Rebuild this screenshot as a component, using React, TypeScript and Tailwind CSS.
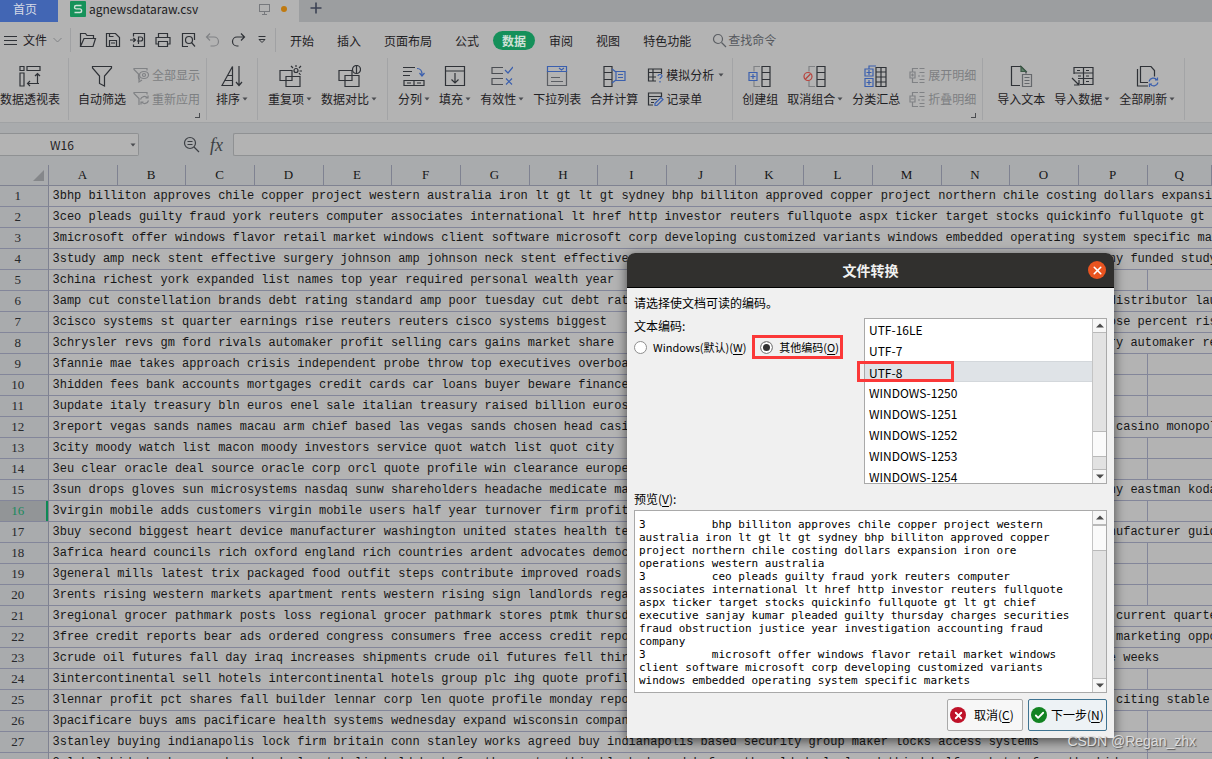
import { useState, type ReactNode } from "react";
import { X, Check } from "lucide-react";

const COLUMNS = "ABCDEFGHIJKLMNOPQ".split("");

const ENCODINGS = [
  "UTF-16LE",
  "UTF-7",
  "UTF-8",
  "WINDOWS-1250",
  "WINDOWS-1251",
  "WINDOWS-1252",
  "WINDOWS-1253",
  "WINDOWS-1254",
];

// text spills from column A, `tail` is the part that shows up again in column P
const ROWS: { text: string; tail?: string }[] = [
  { text: "3bhp billiton approves chile copper project western australia iron lt gt lt gt sydney bhp billiton approved copper project northern chile costing dollars expansion iron ore" },
  { text: "3ceo pleads guilty fraud york reuters computer associates international lt href http investor reuters fullquote aspx ticker target stocks quickinfo fullquote gt lt gt chief" },
  { text: "3microsoft offer windows flavor retail market windows client software microsoft corp developing customized variants windows embedded operating system specific markets" },
  { text: "3study amp neck stent effective surgery johnson amp johnson neck stent effective", tail: "ompany funded study" },
  { text: "3china richest york expanded list names top year required personal wealth year" },
  { text: "3amp cut constellation brands debt rating standard amp poor tuesday cut debt rating", tail: "    distributor launched" },
  { text: "3cisco systems st quarter earnings rise reuters reuters cisco systems biggest", tail: "   rose percent rising" },
  { text: "3chrysler revs gm ford rivals automaker profit selling cars gains market share", tail: "dustry automaker reported" },
  { text: "3fannie mae takes approach crisis independent probe throw top executives overboard" },
  { text: "3hidden fees bank accounts mortgages credit cards car loans buyer beware finance" },
  { text: "3update italy treasury bln euros enel sale italian treasury raised billion euros" },
  { text: "3report vegas sands names macau arm chief based las vegas sands chosen head casino", tail: "     casino monopoly" },
  { text: "3city moody watch list macon moody investors service quot watch list quot city" },
  { text: "3eu clear oracle deal source oracle corp orcl quote profile win clearance european" },
  { text: "3sun drops gloves sun microsystems nasdaq sunw shareholders headache medicate market", tail: "  many eastman kodak" },
  { text: "3virgin mobile adds customers virgin mobile users half year turnover firm profit" },
  { text: "3buy second biggest heart device manufacturer washington united states health technology", tail: "  manufacturer guidant" },
  { text: "3africa heard councils rich oxford england rich countries ardent advocates democracy" },
  { text: "3general mills latest trix packaged food outfit steps contribute improved roads" },
  { text: "3rents rising western markets apartment rents western rising sign landlords regain" },
  { text: "3regional grocer pathmark posts loss regional grocer pathmark stores ptmk thursday", tail: "     current quarter" },
  { text: "3free credit reports bear ads ordered congress consumers free access credit reports", tail: "     marketing opportunity" },
  { text: "3crude oil futures fall day iraq increases shipments crude oil futures fell third", tail: "three weeks" },
  { text: "3intercontinental sell hotels intercontinental hotels group plc ihg quote profile" },
  { text: "3lennar profit pct shares fall builder lennar corp len quote profile monday reported", tail: "     citing stable" },
  { text: "3pacificare buys ams pacificare health systems wednesday expand wisconsin company" },
  { text: "3stanley buying indianapolis lock firm britain conn stanley works agreed buy indianapolis based security group maker locks access systems" },
  { text: "3global bids bank cross border deal metabolic held back fourth quarter thin block demand before the old deal closed third half market before the bid" },
];

// rows whose spilled text covers the last column edge
const LONG_ROWS = [1, 2, 3];

const PREVIEW = `3\tbhp billiton approves chile copper project western
australia iron lt gt lt gt sydney bhp billiton approved copper
project northern chile costing dollars expansion iron ore
operations western australia
3\tceo pleads guilty fraud york reuters computer
associates international lt href http investor reuters fullquote
aspx ticker target stocks quickinfo fullquote gt lt gt chief
executive sanjay kumar pleaded guilty thursday charges securities
fraud obstruction justice year investigation accounting fraud
company
3\tmicrosoft offer windows flavor retail market windows
client software microsoft corp developing customized variants
windows embedded operating system specific markets`;

const DARK = "#2f3237";
const BLUE = "#3a5fae";
const GREY = "#808285";

function Svg({ size = 22, children, color = DARK }: { size?: number; children: ReactNode; color?: string }) {
  return (
    <svg width={size} height={size} viewBox={`0 0 ${size} ${size}`} fill="none" stroke={color} strokeWidth={1.2} className="shrink-0">
      {children}
    </svg>
  );
}

function Caret() {
  return (
    <svg width="6" height="4" viewBox="0 0 6 4" className="ml-0.5 shrink-0 fill-[#4a4c50]">
      <path d="M0.5 0.5h5L3 3.5z" />
    </svg>
  );
}

function BigButton({ icon, label, menu }: { icon: ReactNode; label: string; menu?: boolean }) {
  return (
    <button className="flex shrink-0 flex-col items-center">
      <span className="flex h-6 items-start">{icon}</span>
      <span className="flex h-5 items-center whitespace-nowrap">
        {label}
        {menu && <Caret />}
      </span>
    </button>
  );
}

function SmallButton({ icon, label, menu, muted }: { icon: ReactNode; label: string; menu?: boolean; muted?: boolean }) {
  return (
    <button className={`flex h-5 items-center gap-0.5 whitespace-nowrap ${muted ? "text-[#7d7f82]" : ""}`}>
      {icon}
      {label}
      {menu && <Caret />}
    </button>
  );
}

function Group({ children, corner, pad = "px-[9px]" }: { children: ReactNode; corner?: boolean; pad?: string }) {
  return (
    <div className={`relative flex h-[62px] shrink-0 items-start gap-[9px] border-r border-[#a3a4a6] pt-[7px] ${pad}`}>
      {children}
      {corner && <span className="absolute right-1.5 bottom-0.5 size-[5px] border-r border-b border-[#4a4c50]" />}
    </div>
  );
}

function TabStrip() {
  return (
    <div className="flex h-[22px] bg-[#9c9ea0]">
      <button className="w-[58px] bg-[#4266b4] pr-2 pb-1 text-[#d5dae6]">首页</button>
      <div className="flex w-[241px] items-center bg-[#b3b3b3] pr-3 pb-1 pl-3">
        <svg width="16" height="16" viewBox="0 0 16 16" fill="none">
          <rect width="16" height="16" rx="1" fill="#16925a" />
          <path d="M11.5 4.5H6.2a1.7 1.7 0 0 0 0 3.4h3.6a1.8 1.8 0 0 1 0 3.6H4.5" stroke="#cfe3d9" strokeWidth="1.4" />
        </svg>
        <span className="ml-[3px] text-[#1c1c1e]">agnewsdataraw.csv</span>
        <svg width="11" height="11" viewBox="0 0 11 11" fill="none" stroke="#77797d" className="ml-auto">
          <rect x="0.5" y="0.5" width="10" height="7" />
          <path d="M5.5 7.5v3M3 10.5h5" />
        </svg>
        <span className="ml-[11px] size-1.5 rounded-full bg-[#c07a10]" />
      </div>
      <button aria-label="新建" className="ml-[11px] pb-1.5">
        <svg width="12" height="12" viewBox="0 0 12 12" stroke="#3b4254" strokeWidth="1.6">
          <path d="M6 0.5v11M0.5 6h11" />
        </svg>
      </button>
    </div>
  );
}

function QuickIcons() {
  return (
    <div className="flex items-center gap-[7px]">
      <Svg size={18}>
        <path d="M1.5 15.5v-13h5l1.5 2h6.5v3M1.5 15.5h12.5l2.5-8H5z" />
      </Svg>
      <Svg size={18}>
        <path d="M2.5 2.5h9l4 4v9h-13z" />
        <path d="M5.5 15.5v-6h7v6M7 12h4M5.5 2.5v3h4" />
      </Svg>
      <Svg size={18}>
        <path d="M4.5 5.5v-3h11v13h-11v-2M1 9h5M4.3 7 6.5 9 4.3 11" />
        <path d="M9.5 13V6h2.2a2 2 0 0 1 0 4H8" />
      </Svg>
      <Svg size={18}>
        <path d="M4.5 6V2.5h9V6M4.5 13h-2.5V6.5h14V13h-2.5" />
        <path d="M4.5 10.5h9v5h-9z" />
      </Svg>
      <Svg size={18}>
        <path d="M15.5 9V2.5h-12v13H9" />
        <circle cx="10" cy="9" r="3.5" />
        <path d="m12.5 11.5 3.5 4" />
      </Svg>
      <Svg size={18} color={GREY}>
        <path d="M6 2.5 2.5 6 6 9.500M2.500 6H10a4.500 4.500 0 0 1 0 9H6.500" />
      </Svg>
      <Svg size={18}>
        <path d="M12 2.500 15.500 6 12 9.500M15.500 6H8a4.500 4.500 0 0 0 0 9h1.500" />
      </Svg>
      <svg width="18" height="10" viewBox="0 0 18 10" fill="none" stroke={DARK}>
        <path d="M4.500 1.500h7M5 4.500l3 3 3-3z" />
      </svg>
    </div>
  );
}

function MenuBar() {
  const tabs = ["开始", "插入", "页面布局", "公式", "数据", "审阅", "视图", "特色功能"];
  return (
    <div className="flex h-9 items-center">
      <button className="flex items-center pl-1">
        <svg width="13" height="11" viewBox="0 0 13 11" stroke={DARK}>
          <path d="M0 1.500h13M0 5.500h13M0 9.500h13" />
        </svg>
        <span className="ml-1.5">文件</span>
        <svg width="9" height="6" viewBox="0 0 9 6" fill="none" stroke={GREY} className="ml-1.5">
          <path d="M0.500 1l4 4 4-4" />
        </svg>
      </button>
      <div className="ml-2 h-6 border-l border-[#a0a1a3]" />
      <div className="pl-2">
        <QuickIcons />
      </div>
      <div className="ml-[3px] h-6 border-l border-[#a0a1a3]" />
      <nav className="ml-[5px] flex shrink-0 gap-[5px]">
        {tabs.map((tab) => (
          <button
            key={tab}
            className={`h-[19px] rounded-full px-[9px] leading-[19px] whitespace-nowrap ${
              tab === "数据" ? "bg-[#15905a] font-bold text-[#cfe0d7]" : ""
            }`}
          >
            {tab}
          </button>
        ))}
      </nav>
      <button className="ml-3 flex shrink-0 items-center gap-px text-[#55585d]">
        <Svg size={15} color="#5b5e63">
          <circle cx="6" cy="6" r="4.500" />
          <path d="m9.500 9.500 4.500 4.500" />
        </Svg>
        查找命令
      </button>
    </div>
  );
}

function Ribbon() {
  return (
    <div className="flex h-[65px] overflow-hidden border-b border-[#a0a2a4]">
      <div className="-ml-2 flex shrink-0">
        <Group pad="px-2">
          <BigButton
            label="数据透视表"
            icon={
              <Svg>
                <path d="M1 1.500h4v4H1zM8 1.500h13v4H8zM1 8h4v13H1zM18.500 19V9M16 11l2.500-2.500L21 11M20 18.500H9M11 16l-2.500 2.500L11 21" />
              </Svg>
            }
          />
        </Group>
      </div>
      <Group corner pad="pl-[9px] pr-1.5">
        <BigButton
          label="自动筛选"
          icon={
            <Svg>
              <path d="M1.500 1.500h19v1.500l-7 8v10l-5-2.500V11l-7-8z" />
            </Svg>
          }
        />
        <div className="-ml-0.5 flex flex-col gap-1">
          <SmallButton
            muted
            label="全部显示"
            icon={
              <Svg size={17} color={GREY}>
                <path d="M7 12.500 5.500 11V7L1 2.500V1.500h13v2" />
                <ellipse cx="11" cy="8" rx="4.500" ry="3.500" />
                <circle cx="11" cy="8" r="1.500" />
                <path d="M6 9v6l3-2" />
              </Svg>
            }
          />
          <SmallButton
            muted
            label="重新应用"
            icon={
              <Svg size={17} color={GREY}>
                <path d="M6 14V7.500L1 2.500V1.500h13v2" />
                <path d="M7.500 8.500a4 4 0 0 1 7-1.500M15 4.500V7h-2.500M15.500 9.500a4 4 0 0 1-7 1.500M8 13.500V11h2.500" />
              </Svg>
            }
          />
        </div>
      </Group>
      <Group>
        <BigButton
          menu
          label="排序"
          icon={
            <Svg>
              <path d="M1 20.500 11.500 1.500v19zM4 15.500h7.500M7 10.500h4.500M18 1v19M15 17l3 3.500L21 17" />
            </Svg>
          }
        />
      </Group>
      <Group pad="px-2.5">
        <BigButton
          menu
          label="重复项"
          icon={
            <Svg size={23}>
              <path d="M1 5.500h12v10H1zM7 11.500h14v10H7z" />
              <circle cx="17" cy="5.500" r="2" />
              <path d="M17 0v2M12 1l2 2M22 1l-2 2M20.500 6H23M21.500 10l-1.500-2" />
            </Svg>
          }
        />
        <BigButton
          menu
          label="数据对比"
          icon={
            <Svg size={23}>
              <path d="M1 5.500h13v10H1zM7 10.500h14v11H7z" />
              <circle cx="18.500" cy="4.500" r="4" />
              <path d="M18.500 0v9" />
            </Svg>
          }
        />
      </Group>
      <Group pad="pl-2.5 pr-2">
        <BigButton
          menu
          label="分列"
          icon={
            <Svg>
              <path d="M0 2.500h12M0 6.500h9M0 10.500h7M1 15.500h20v5H1zM11 15.500v5M4 18h4M14 18h4" />
              <path d="M14 3.500c4 0 5 2 5 6M16.500 8l2.500 3 2.500-3" stroke={BLUE} />
            </Svg>
          }
        />
        <BigButton
          menu
          label="填充"
          icon={
            <Svg>
              <path d="M1.500 1.500h19v19h-19zM1.500 6h19M11 8v10M7.500 14.500 11 18l3.500-3.500" />
            </Svg>
          }
        />
        <BigButton
          menu
          label="有效性"
          icon={
            <Svg>
              <path d="M12 2.500H1v6h11M12 13.500H1v6h11" stroke="#4b4e53" />
              <path d="m14 5 3 3 5-6M15 13.500l6 6M21 13.500l-6 6" stroke={BLUE} />
            </Svg>
          }
        />
        <BigButton
          label="下拉列表"
          icon={
            <Svg>
              <path d="M1.500 6.500h19v14h-19zM5 12.500h9M5 16.500h12" stroke="#5b5e63" />
              <path d="M1.500 1.500h19v5h-19zM13 3l2.500 2L18 3" stroke={BLUE} />
            </Svg>
          }
        />
        <BigButton
          label="合并计算"
          icon={
            <Svg size={23}>
              <path d="M1 1.500h8v20H1zM1 7.500h8M1 14.500h8" />
              <path d="M13 6.500h9v9h-9zM15 9.500h5M15 12.500h5M9 4l4 3M9 18l4-3" stroke={BLUE} />
            </Svg>
          }
        />
        <div className="flex flex-col gap-1">
          <SmallButton
            menu
            label="模拟分析"
            icon={
              <Svg size={17}>
                <path d="M9 14H1.500V2h13v5M1.500 5.500h13M1.500 10H9M6 2v12" />
                <path d="M11 9c0-2 4-2 4 0 0 1.500-2 1.500-2 3M13 14v1.500" stroke={BLUE} />
              </Svg>
            }
          />
          <SmallButton
            label="记录单"
            icon={
              <Svg size={17}>
                <path d="M6 14H1.500V2h13v4M1.500 5.500h13M4 8.500h6M4 11.500h3" />
                <path d="m8 12.500 6-6 2 2-6 6H8z" stroke={BLUE} />
              </Svg>
            }
          />
        </div>
      </Group>
      <Group corner pad="pl-[9px] pr-1.5">
        <BigButton
          label="创建组"
          icon={
            <Svg size={24}>
              <path d="M14 1.500h8v20h-8zM14 7.500h8M14 14.500h8" />
              <path d="M12 1.500H6v5M6 16v5.500h6" stroke={GREY} />
              <path d="M1 7.500h8v8H1zM5 9v5M2.500 11.500h5" stroke={BLUE} />
            </Svg>
          }
        />
        <BigButton
          menu
          label="取消组合"
          icon={
            <Svg size={24}>
              <path d="M14 1.500h8v20h-8zM14 7.500h8M14 14.500h8" />
              <path d="M12 1.500H6v5M6 16v5.500h6" stroke={GREY} />
              <circle cx="5" cy="11.500" r="4" stroke="#b8423c" />
              <path d="m2.500 14 5-5" stroke="#b8423c" />
            </Svg>
          }
        />
        <BigButton
          label="分类汇总"
          icon={
            <Svg size={24}>
              <path d="M12 2.500h10v19H12zM12 7h10M12 12h10M12 17h10M17 2.500v19" />
              <path d="M1 4h8v7H1zM5 5v5M2.500 7.500h5M1 13.500h8v8H1zM5 15v5M2.500 17.500h5M5 4V1h7" stroke={BLUE} />
            </Svg>
          }
        />
        <div className="flex flex-col gap-1">
          <SmallButton
            muted
            label="展开明细"
            icon={
              <Svg size={17} color={GREY}>
                <path d="M1 5h5v6H1zM2 8h3M3.500 6.500v3M3.500 5V1.500H9M3.500 11v4.500H9M10.500 1.500h5M10.500 5.500h5M9 9h2M12.500 9h3M10.500 12.500h5M10.500 15.500h5" />
              </Svg>
            }
          />
          <SmallButton
            muted
            label="折叠明细"
            icon={
              <Svg size={17} color={GREY}>
                <path d="M1 5h5v6H1zM2 8h3M3.500 5V1.500H9M3.500 11v4.500H9M10.500 1.500h5M10.500 5.500h5M9 9h2M12.500 9h3M10.500 12.500h5M10.500 15.500h5" />
              </Svg>
            }
          />
        </div>
      </Group>
      <Group pad="pl-3.5 pr-[9px]">
        <BigButton
          label="导入文本"
          icon={
            <Svg size={23}>
              <path d="M10 20.500H1.500v-19H11l5 5v2" />
              <path d="M11 1.500v5h5z" fill="#5d8168" stroke="#3d5a47" />
              <path d="M12.500 9.500h9v12h-9zM14.500 12.500h5M14.500 15.500h5M14.500 18.500h5" stroke="#65686c" />
            </Svg>
          }
        />
        <BigButton
          menu
          label="导入数据"
          icon={
            <Svg size={24}>
              <path d="M4 9V2.500h19v17H10M4 8h19M8 13.500h15M13.500 2.500v17M7 5.500h3M16 5.500h3M8 11h3M16 11h3M16 16.500h3M2 13l7 7M9 15v5H4" />
            </Svg>
          }
        />
        <BigButton
          menu
          label="全部刷新"
          icon={
            <Svg size={23}>
              <path d="M12 17.500H4.500v-16H15l3.500 4v6M1.500 4v17H12" />
              <path d="M13 16.500a4.500 4.500 0 0 1 8-1.500M21.500 12.500V15H19M22 17.500a4.500 4.500 0 0 1-8 1.500M13.500 22v-3H16" stroke={BLUE} />
            </Svg>
          }
        />
      </Group>
    </div>
  );
}

function FormulaBar() {
  return (
    <div className="flex h-[42px] items-center bg-[#a9abad] pt-px">
      <div className="flex h-[23px] w-[139px] items-center rounded-r-xs border border-l-0 border-[#8f9193] bg-[#b3b3b3] pr-0.5">
        <input aria-label="名称框" defaultValue="W16" className="w-full min-w-0 bg-transparent pr-1 text-center outline-none" />
        <Caret />
      </div>
      <button aria-label="查找" className="ml-11">
        <Svg size={17} color="#3c3f44">
          <circle cx="7" cy="7" r="5.500" />
          <path d="M4.500 5.500h5M4.500 8.500h5M11 11l5 5" />
        </Svg>
      </button>
      <button className="ml-2.5 w-[22px] text-left font-[Liberation_Serif,serif] text-[18px] leading-5 text-[#3c3f44] italic">fx</button>
      <input aria-label="编辑栏" className="ml-px h-[23px] min-w-0 flex-1 rounded-l-xs border border-r-0 border-[#8f9193] bg-[#b3b3b3] px-1 outline-none" />
    </div>
  );
}

function Sheet() {
  return (
    <table className="w-full table-fixed border-collapse font-[Liberation_Mono,monospace] text-[12px] text-[#161616]">
      <colgroup>
        <col className="w-12" />
        {COLUMNS.map((c, i) => (
          <col key={c} className={i === 16 ? "" : i % 3 === 1 ? "w-[68px]" : "w-[69px]"} />
        ))}
      </colgroup>
      <thead>
        <tr className="h-5 bg-[#a9abad]">
          <th className="border-r border-b border-[#7f8291] p-0">
            <svg width="11" height="11" viewBox="0 0 11 11" className="mr-1 ml-auto fill-[#85878a]">
              <path d="M11 0v11H0z" />
            </svg>
          </th>
          {COLUMNS.map((c) => (
            <th key={c} className="border-r border-b border-[#7f8291] p-0 font-[Liberation_Serif,serif] text-[13px] leading-5 font-normal">
              {c}
            </th>
          ))}
        </tr>
      </thead>
      <tbody>
        {ROWS.map((row, i) => {
          const n = i + 1;
          const active = n === 16;
          return (
            <tr key={n} className="h-[21px] border-b border-[#83869a]">
              <th
                className={`border-r border-[#7f8291] p-0 pr-3 font-[Liberation_Serif,serif] text-[13px] leading-5 font-normal ${
                  active ? "bg-[#929597] text-[#198a5c] shadow-[inset_-2px_0_0_#0e8a55]" : "bg-[#a9abad] text-[#26282b]"
                }`}
              >
                {n}
              </th>
              <td colSpan={15} className="p-0 pl-1 leading-5 whitespace-nowrap">
                <div className="w-0">{row.text}</div>
              </td>
              <td className={`p-0 leading-5 whitespace-pre ${row.tail || LONG_ROWS.includes(n) ? "" : "border-r border-[#83869a]"}`}>
                <div className="w-0 pl-0.5">{row.tail}</div>
              </td>
              <td className="p-0" />
            </tr>
          );
        })}
      </tbody>
    </table>
  );
}

function ScrollBar({ thumb }: { thumb: "top" | "bottom" }) {
  return (
    <div className="flex w-3.5 shrink-0 flex-col border-l border-[#c4c4c4] bg-[#e2e2e2]">
      <button aria-label="向上滚动" className="flex h-3.5 items-center justify-center border-b border-[#b9b9b9] bg-[#f6f6f6]">
        <svg width="8" height="5" viewBox="0 0 8 5" className="fill-[#4a4a4a]">
          <path d="M4 0.500 8 4.500H0z" />
        </svg>
      </button>
      {thumb === "bottom" && <div className="flex-1" />}
      <div className="h-[26px] border-y border-[#b9b9b9] bg-[#fafafa]" />
      <div className={thumb === "bottom" ? "h-3" : "flex-1"} />
      <button aria-label="向下滚动" className="flex h-3.5 items-center justify-center border-t border-[#b9b9b9] bg-[#f6f6f6]">
        <svg width="8" height="5" viewBox="0 0 8 5" className="fill-[#4a4a4a]">
          <path d="M0 0.500h8l-4 4z" />
        </svg>
      </button>
    </div>
  );
}

const radioClass =
  "size-[13px] appearance-none rounded-full border border-[#8e8e8e] bg-white checked:bg-[#333] checked:shadow-[inset_0_0_0_2px_white]";

function ConvertDialog() {
  const [mode, setMode] = useState("other");
  const [encoding, setEncoding] = useState("UTF-8");

  return (
    <div
      role="dialog"
      aria-labelledby="dialog-title"
      className="absolute top-[253px] left-[627px] w-[487px] rounded-t-lg bg-[#f0f0f0] text-black shadow-[0_3px_12px_rgba(0,0,0,0.6)]"
    >
      <div className="relative flex h-[35px] items-center justify-center rounded-t-lg border-b border-black bg-[#31302e]">
        <h2 id="dialog-title" className="text-[14px] font-bold text-[#f0f0f0]">
          文件转换
        </h2>
        <button aria-label="关闭" className="absolute right-2 flex size-[18px] items-center justify-center rounded-full bg-[#e95420] text-white">
          <X size={13} strokeWidth={3} />
        </button>
      </div>

      <div className="px-[7px] pb-[7px]">
        <p className="h-[30px] leading-[30px]">请选择使文档可读的编码。</p>
        <div className="flex">
          <fieldset className="flex-1">
            <legend className="h-4 leading-4">文本编码:</legend>
            <div className="flex h-[26px] items-center text-[11px] whitespace-nowrap">
              <label className="flex items-center gap-1.5">
                <input type="radio" name="mode" checked={mode === "windows"} onChange={() => setMode("windows")} className={radioClass} />
                <span>
                  Windows(默认)(<u className="underline-offset-2">W</u>)
                </span>
              </label>
              <label className="relative ml-3.5 flex items-center gap-1.5">
                <input type="radio" name="mode" checked={mode === "other"} onChange={() => setMode("other")} className={radioClass} />
                <span>
                  其他编码(<u className="underline-offset-2">O</u>)
                </span>
                <span className="pointer-events-none absolute -inset-y-1 -right-1 -left-2 border-3 border-[#fb3838]" />
              </label>
            </div>
          </fieldset>
          <div className="flex h-[166px] w-[243px] border border-[#a9a9a9] bg-white">
            <div className="relative h-full flex-1">
              <ul role="listbox" aria-label="编码" className="h-full overflow-hidden">
                {ENCODINGS.map((e) => (
                  <li
                    key={e}
                    role="option"
                    aria-selected={e === encoding}
                    onClick={() => setEncoding(e)}
                    className={`h-[21px] pl-1 leading-[21px] ${e === encoding ? "border-y border-[#d3d7db] bg-[#dfe3e7] leading-[19px]" : ""}`}
                  >
                    {e}
                  </li>
                ))}
              </ul>
              <span className="pointer-events-none absolute top-[42px] -left-2 h-[21px] w-[97px] border-3 border-[#fb3838]" />
            </div>
            <ScrollBar thumb="bottom" />
          </div>
        </div>

        <label htmlFor="preview" className="block h-[26px] pt-px leading-[28px]">
          预览(<u className="underline-offset-2">V</u>):
        </label>
        <div className="flex h-[183px] border border-[#a9a9a9] bg-white">
          <textarea
            id="preview"
            readOnly
            value={PREVIEW}
            className="flex-1 resize-none overflow-hidden pt-[7px] pl-1 font-[DejaVu_Sans_Mono,monospace] text-[11px] leading-[13px] whitespace-pre outline-none [tab-size:11]"
          />
          <ScrollBar thumb="top" />
        </div>

        <div className="flex justify-end gap-[5px] pt-1.5">
          <button className="flex h-8 w-[76px] items-center gap-2 rounded-xs border border-[#a9a9a9] bg-[#f7f7f7] pl-0.5 whitespace-nowrap">
            <span className="flex size-4 shrink-0 items-center justify-center rounded-full bg-[#bf1229] text-white">
              <X size={11} strokeWidth={4} />
            </span>
            <span>
              取消(<u className="underline-offset-2">C</u>)
            </span>
          </button>
          <button className="flex h-8 w-[79px] items-center gap-1 rounded-xs border border-[#3f7391] bg-[#edf2f5] pl-0.5 whitespace-nowrap">
            <span className="flex size-4 shrink-0 items-center justify-center rounded-full bg-[#128322] text-white">
              <Check size={11} strokeWidth={4} />
            </span>
            <span>
              下一步(<u className="underline-offset-2">N</u>)
            </span>
          </button>
        </div>
      </div>
    </div>
  );
}

export default function App() {
  return (
    <div className="relative h-screen overflow-hidden bg-[#b3b3b3] font-[Noto_Sans_CJK_SC,sans-serif] text-[12px] leading-4 text-[#1f2124]">
      <TabStrip />
      <MenuBar />
      <Ribbon />
      <FormulaBar />
      <Sheet />
      <ConvertDialog />
      <span className="absolute right-4 bottom-2.5 font-[Liberation_Sans,sans-serif] text-[14px] text-[#dcdcdc] [text-shadow:1px_1px_1px_#555]">
        CSDN @Regan_zhx
      </span>
    </div>
  );
}
